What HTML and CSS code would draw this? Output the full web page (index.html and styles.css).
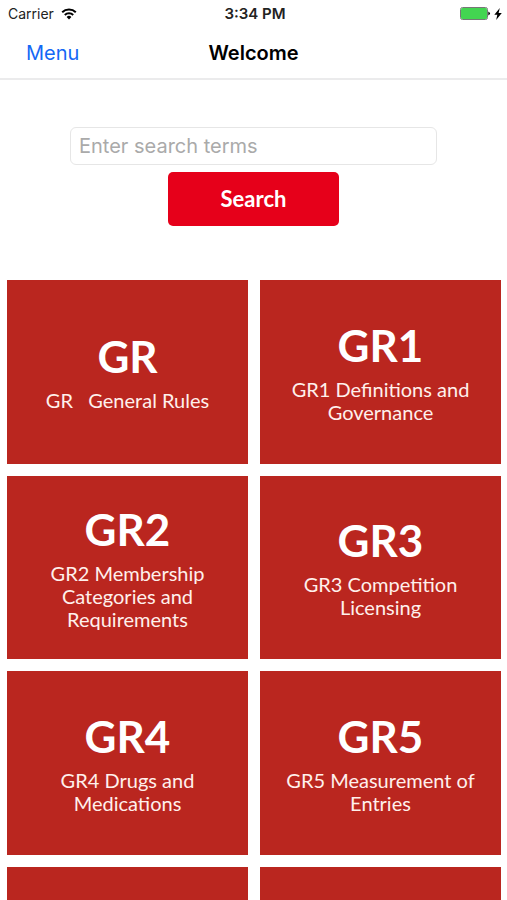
FILE: index.html
```html
<!DOCTYPE html>
<html lang="en">
<head>
<meta charset="utf-8">
<meta name="viewport" content="width=device-width, initial-scale=1">
<title>Welcome</title>
<link rel="stylesheet" href="styles.css">
</head>
<body>
<div class="status">
  <div class="carrier">
    <span>Carrier</span>
    <svg class="wifi" viewBox="0 0 16 12" aria-hidden="true"><path class="arc" d="M1.2 4.2a9.7 9.7 0 0 1 13.6 0M3.8 7a6 6 0 0 1 8.4 0"/><path d="M5.6 8.9a3.4 3.4 0 0 1 4.8 0L8 11.5z"/></svg>
  </div>
  <span class="time">3:34 PM</span>
  <div class="power">
    <svg class="battery" viewBox="0 0 31 13" aria-hidden="true"><rect class="shell" x=".5" y=".5" width="27" height="12" rx="2"/><rect class="charge" x="1" y="1" width="26" height="11" rx="1.5"/><path d="M28.3 4.5q3.4 2 0 4z"/></svg>
    <svg class="bolt" viewBox="0 0 8 12" aria-hidden="true"><path d="M5.8 0 .3 6.8h3L2.2 12 7.8 5H4.6z"/></svg>
  </div>
</div>
<header class="nav">
  <a class="menu" href="#">Menu</a>
  <h1>Welcome</h1>
</header>
<main>
  <form class="search">
    <input type="search" aria-label="Search terms" placeholder="Enter search terms">
    <button type="button">Search</button>
  </form>
  <nav class="tiles" aria-label="Rules">
    <a class="tile" href="#"><strong>GR</strong><span>GR &nbsp; General Rules</span></a>
    <a class="tile" href="#"><strong>GR1</strong><span>GR1 Definitions and Governance</span></a>
    <a class="tile" href="#"><strong>GR2</strong><span>GR2 Membership Categories and Requirements</span></a>
    <a class="tile" href="#"><strong>GR3</strong><span>GR3 Competition Licensing</span></a>
    <a class="tile" href="#"><strong>GR4</strong><span>GR4 Drugs and Medications</span></a>
    <a class="tile" href="#"><strong>GR5</strong><span>GR5 Measurement of Entries</span></a>
    <a class="tile" href="#"></a>
    <a class="tile" href="#"></a>
  </nav>
</main>
</body>
</html>
```

FILE: styles.css
```css
* { box-sizing: border-box; }

html, body { height: 100%; }

body {
  margin: 0;
  display: flex;
  flex-direction: column;
  overflow: hidden;
  background: #fff;
  color: #000;
  font-family: Inter, "Liberation Sans", sans-serif;
}

.status {
  flex: none;
  display: grid;
  grid-template-columns: 1fr auto 1fr;
  align-items: center;
  height: 27px;
  padding: 0 5px 0 8px;
  font-size: 14px;
}

.carrier, .power { display: flex; align-items: center; gap: 7px; }
.carrier { color: #222; }
.power { justify-content: flex-end; gap: 3px; }
.time { font-size: 15px; font-weight: 600; color: #222; }
.wifi { width: 16px; height: 12px; }
.wifi .arc { fill: none; stroke: #000; stroke-width: 2; }
.battery { width: 31px; height: 13px; }
.shell { fill: none; stroke: #777; stroke-width: 1; }
.charge { fill: #43d551; }
.bolt { width: 8px; height: 12px; }

.nav {
  flex: none;
  display: grid;
  grid-template-columns: 1fr auto 1fr;
  align-items: center;
  height: 53px;
  padding: 0 26px;
  border-bottom: 2px solid #ebebec;
  font-size: 20px;
}

.nav h1 { margin: 0; font-size: 20px; font-weight: 600; }
.menu { color: #1468f5; text-decoration: none; }

main { flex: 1; min-height: 0; overflow: hidden; }

.search {
  display: flex;
  flex-direction: column;
  align-items: center;
  gap: 7px;
  padding: 47px 70px 54px;
}

.search input {
  appearance: none;
  width: 100%;
  height: 38px;
  padding: 0 8px;
  border: 1px solid #e6e6e6;
  border-radius: 6px;
  background: #fff;
  font: 20px Inter, sans-serif;
}

.search input::placeholder { color: #aaa; }

.search button {
  width: 171px;
  height: 54px;
  padding: 0 0 2px;
  border: 0;
  border-radius: 5px;
  background: #e6001a;
  color: #fff;
  font: 700 22px Lato, sans-serif;
}

.tiles {
  display: grid;
  grid-template-columns: 1fr 1fr;
  gap: 12px;
  padding: 0 6px 0 7px;
}

.tile {
  display: flex;
  flex-direction: column;
  align-items: center;
  justify-content: center;
  gap: 6px;
  aspect-ratio: 21 / 16;
  padding: 0 26px 2px;
  background: #ba261f;
  color: #fff;
  font-family: Lato, sans-serif;
  font-size: 20px;
  line-height: 23px;
  text-align: center;
  text-decoration: none;
}

.tile span { color: #fff0ec; }
.tile strong { font-size: 44px; line-height: 54px; }
```
